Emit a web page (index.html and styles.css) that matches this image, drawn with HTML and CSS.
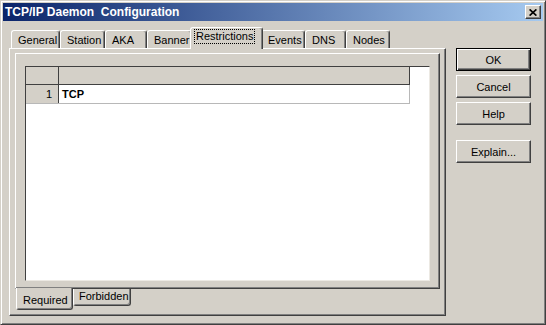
FILE: index.html
```html
<!DOCTYPE html>
<html lang="en">
<head>
  <meta charset="UTF-8">
  <title>TCP/IP Daemon Configuration</title>
  <link rel="stylesheet" href="styles.css">
</head>
<body>
  <div class="window">
    <div class="titlebar">
      <span class="title">TCP/IP Daemon  Configuration</span>
      <button class="close" aria-label="Close">
        <svg width="8" height="7" viewBox="0 0 8 7"><path d="M0.6 0.4 L7.4 6.6 M7.4 0.4 L0.6 6.6" stroke="#000" stroke-width="1.7" fill="none"/></svg>
      </button>
    </div>

    <div class="content">
      <div class="sheet">
        <div class="tabs">
          <div class="tab">General</div>
          <div class="tab">Station</div>
          <div class="tab">AKA</div>
          <div class="tab">Banner</div>
          <div class="tab active"><span class="focus">Restrictions</span></div>
          <div class="tab">Events</div>
          <div class="tab">DNS</div>
          <div class="tab">Nodes</div>
        </div>

        <div class="page">
          <div class="subpage">
            <div class="grid">
              <div class="grid-head">
                <div class="rowhdr"></div>
                <div class="colhdr"></div>
              </div>
              <div class="grid-row">
                <div class="rowhdr">1</div>
                <div class="cell">TCP</div>
              </div>
            </div>
          </div>
          <div class="subtabs">
            <div class="subtab active">Required</div>
            <div class="subtab">Forbidden</div>
          </div>
        </div>
      </div>

      <div class="buttons">
        <button class="btn default">OK</button>
        <button class="btn">Cancel</button>
        <button class="btn">Help</button>
        <button class="btn explain">Explain...</button>
      </div>
    </div>
  </div>
</body>
</html>
```

FILE: styles.css
```css
* {
  box-sizing: border-box;
}
body {
  margin: 0;
  padding: 0;
  font-family: "Liberation Sans", Arial, sans-serif;
  font-size: 11px;
  color: #000;
  background: #d4d0c8;
}
.window {
  width: 546px;
  height: 325px;
  background: #d4d0c8;
  border: 1px solid;
  border-color: #d4d0c8 #404040 #404040 #d4d0c8;
  box-shadow: inset 1px 1px #fff, inset -1px -1px #808080;
  padding: 2px;
}
.titlebar {
  height: 18px;
  display: flex;
  align-items: center;
  justify-content: space-between;
  padding: 0 2px 0 2px;
  background: linear-gradient(to right, #0a246a, #a6caf0);
}
.title {
  color: #fff;
  font-weight: bold;
  font-size: 12px;
  white-space: pre;
}
.close {
  width: 16px;
  height: 14px;
  padding: 0;
  display: flex;
  align-items: center;
  justify-content: center;
  background: #d4d0c8;
  border: 1px solid;
  border-color: #fff #404040 #404040 #fff;
  box-shadow: inset -1px -1px #808080;
}

.content {
  display: flex;
  padding: 6px 0 0 6px;
}
.sheet {
  width: 437px;
}
.tabs {
  display: flex;
  align-items: flex-end;
  height: 21px;
  padding-left: 2px;
  position: relative;
  z-index: 1;
}
.tab {
  height: 18px;
  padding: 3px 0 0 6px;
  border-top: 1px solid #fff;
  border-left: 1px solid #fff;
  border-right: 1px solid #404040;
  box-shadow: inset -1px 0 #808080;
  border-radius: 3px 3px 0 0;
  white-space: nowrap;
}
.tab:nth-child(1) { width: 49px; }
.tab:nth-child(2) { width: 45px; }
.tab:nth-child(3) { width: 42px; }
.tab:nth-child(4) { width: 45px; }
.tab:nth-child(6) { width: 44px; }
.tab:nth-child(7) { width: 41px; }
.tab:nth-child(8) { width: 44px; }
.tab.active {
  width: 73px;
  height: 22px;
  margin: 0 -2px -1px -2px;
  padding: 2px 0 0 4px;
  background: #d4d0c8;
  position: relative;
}
.focus {
  display: inline-block;
  padding: 0 1px;
  line-height: 13px;
  outline: 1px dotted #000;
}

.page {
  height: 268px;
  border: 1px solid;
  border-color: #fff #404040 #404040 #fff;
  box-shadow: inset -1px -1px #808080;
  padding: 4px 0 0 5px;
}
.subpage {
  width: 425px;
  height: 236px;
  border: 1px solid;
  border-color: #fff #404040 #404040 #fff;
  box-shadow: inset -1px -1px #808080;
  padding: 12px 9px 7px 9px;
}
.grid {
  width: 405px;
  height: 215px;
  background: #fff;
  border: 1px solid;
  border-color: #404040 #ece9e3 #ece9e3 #404040;
}
.grid-head,
.grid-row {
  display: flex;
  width: 384px;
}
.grid-head {
  height: 18px;
  background: #d4d0c8;
  border-bottom: 1px solid #404040;
}
.grid-head .colhdr {
  flex: 1;
  border-right: 1px solid #404040;
}
.rowhdr {
  width: 33px;
  background: #d4d0c8;
  border-right: 1px solid #404040;
}
.grid-row {
  height: 19px;
  border-bottom: 1px solid #b8b8b8;
}
.grid-row .rowhdr {
  text-align: right;
  padding: 3px 6px 0 0;
}
.cell {
  flex: 1;
  font-weight: bold;
  padding: 3px 0 0 3px;
  border-right: 1px solid #b8b8b8;
}

.subtabs {
  display: flex;
  align-items: flex-start;
  margin: -1px 0 0 1px;
}
.subtab {
  height: 17px;
  margin-top: 1px;
  padding: 1px 0 0 5px;
  border-left: 1px solid #fff;
  border-right: 1px solid #404040;
  border-bottom: 1px solid #404040;
  box-shadow: inset -1px -1px #808080;
  border-radius: 0 0 3px 3px;
  width: 58px;
}
.subtab.active {
  width: 57px;
  height: 22px;
  margin-top: 0;
  padding: 6px 0 0 6px;
  background: #d4d0c8;
}

.buttons {
  display: flex;
  flex-direction: column;
  gap: 4px;
  margin: 21px 0 0 10px;
}
.btn {
  width: 75px;
  height: 23px;
  padding: 0;
  font-family: "Liberation Sans", Arial, sans-serif;
  font-size: 11px;
  color: #000;
  background: #d4d0c8;
  border: 1px solid;
  border-color: #fff #404040 #404040 #fff;
  box-shadow: inset -1px -1px #808080;
}
.btn.default {
  border-color: #000;
  box-shadow: inset 1px 1px #fff, inset -1px -1px #404040, inset -2px -2px #808080;
}
.btn.explain {
  margin-top: 11px;
}
```
